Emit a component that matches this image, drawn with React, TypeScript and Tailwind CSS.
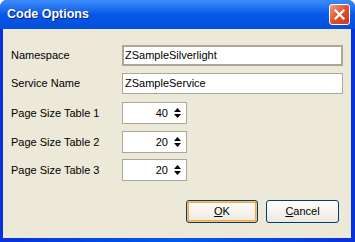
import React from "react";

function SpinBox({ value }: { value: string }) {
  return (
    <div className="flex h-[22px] w-[65px] items-center border border-[#aca899] bg-white">
      <div className="flex-1 pr-[6px] text-right text-[11px] leading-none text-black">{value}</div>
      <div className="mr-[5px] flex flex-col items-center gap-[2px]">
        <svg width="7" height="4" viewBox="0 0 7 4">
          <polygon points="3.5,0 7,4 0,4" fill="#000" />
        </svg>
        <svg width="7" height="4" viewBox="0 0 7 4">
          <polygon points="0,0 7,0 3.5,4" fill="#000" />
        </svg>
      </div>
    </div>
  );
}

function Row({ label, children, mt }: { label: string; children: React.ReactNode; mt: string }) {
  return (
    <div className={`flex items-center ${mt}`}>
      <div className="w-[111px] text-[11px] text-black">{label}</div>
      {children}
    </div>
  );
}

export default function App() {
  return (
    <div
      className="flex h-[242px] w-[355px] flex-col overflow-hidden rounded-t-[7px] bg-gradient-to-r from-[#0831d9] via-[#0058ee] to-[#0831d9]"
      style={{ fontFamily: '"Liberation Sans", Arial, sans-serif' }}
    >
      {/* Title bar */}
      <div className="flex h-[29px] shrink-0 items-center justify-between bg-gradient-to-b from-[#3d8cfb] via-[#0758e6] to-[#0250dd] pl-[7px] pr-[5px]">
        <div className="text-[12.5px] font-bold text-white [text-shadow:1px_1px_0_#0a1f80]">Code Options</div>
        <div className="flex h-[21px] w-[21px] items-center justify-center rounded-[3px] border border-white bg-gradient-to-br from-[#f09a7c] via-[#e0522e] to-[#c4391b]">
          <svg width="11" height="11" viewBox="0 0 11 11">
            <path d="M1.5 1.5 L9.5 9.5 M9.5 1.5 L1.5 9.5" stroke="#fff" strokeWidth="2.2" strokeLinecap="square" />
          </svg>
        </div>
      </div>
      {/* Frame */}
      <div className="flex flex-1 pb-[4px] pl-[3px] pr-[4px]">
        <div className="flex flex-1 flex-col bg-[#ece9d8] pl-[8px] pr-[8px]">
          <Row label="Namespace" mt="mt-[16px]">
            <div className="flex h-[21px] w-[221px] items-center border-2 border-[#aca899] bg-white pl-[1px] text-[11px] text-black">
              ZSampleSilverlight
            </div>
          </Row>
          <Row label="Service Name" mt="mt-[7px]">
            <div className="flex h-[21px] w-[221px] items-center border border-[#aca899] bg-white pl-[2px] text-[11px] text-black">
              ZSampleService
            </div>
          </Row>
          <Row label="Page Size Table 1" mt="mt-[8px]">
            <SpinBox value="40" />
          </Row>
          <Row label="Page Size Table 2" mt="mt-[7px]">
            <SpinBox value="20" />
          </Row>
          <Row label="Page Size Table 3" mt="mt-[6px]">
            <SpinBox value="20" />
          </Row>
          <div className="mt-[19px] flex justify-end gap-[8px] pr-[4px]">
            <button className="flex h-[23px] w-[72px] items-center justify-center rounded-[3px] border border-[#003c74] bg-gradient-to-b from-[#fffefc] to-[#ece9dd] text-[11px] text-black shadow-[inset_0_0_0_1px_#f8c36a,inset_0_0_0_2px_#f5a54a]">
              <span><span className="underline">O</span>K</span>
            </button>
            <button className="flex h-[23px] w-[73px] items-center justify-center rounded-[3px] border border-[#003c74] bg-gradient-to-b from-[#fffefc] to-[#ece9dd] text-[11px] text-black">
              <span><span className="underline">C</span>ancel</span>
            </button>
          </div>
        </div>
      </div>
    </div>
  );
}
